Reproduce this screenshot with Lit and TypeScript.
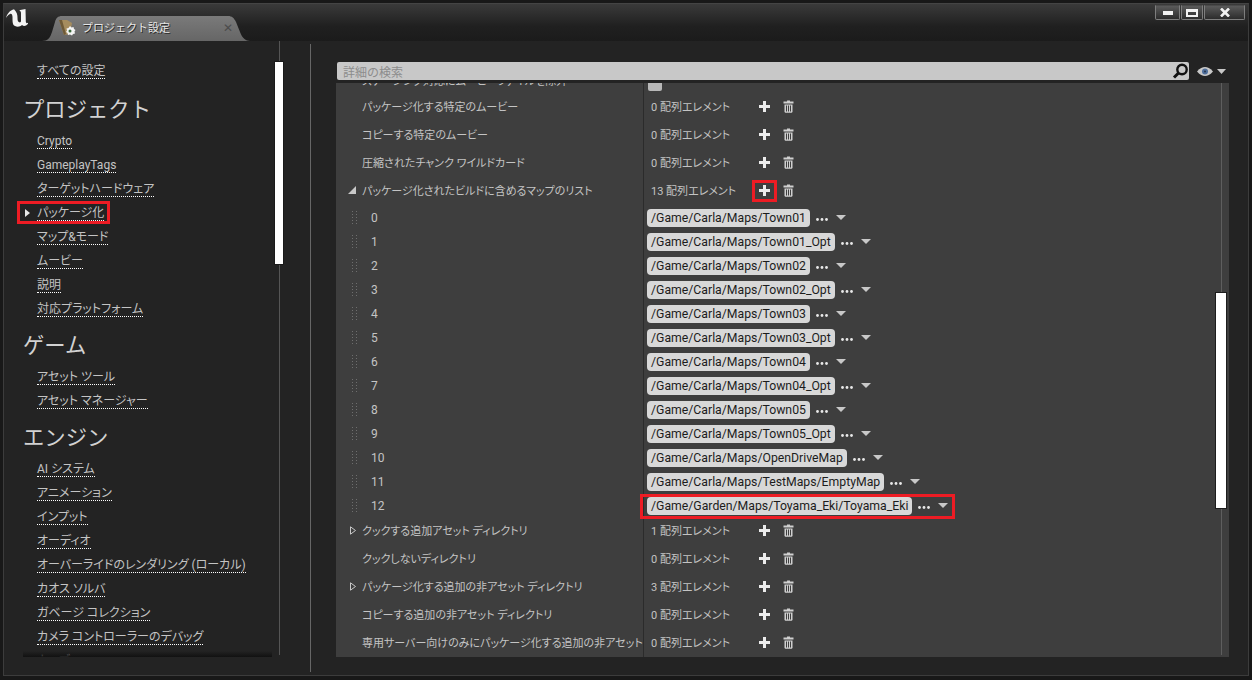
import { LitElement, html, css, svg } from "lit";
import { customElement } from "lit/decorators.js";

const sections = [
  {
    title: "プロジェクト",
    items: ["Crypto", "GameplayTags", "ターゲットハードウェア", "パッケージ化", "マップ&モード", "ムービー", "説明", "対応プラットフォーム"],
  },
  { title: "ゲーム", items: ["アセット ツール", "アセット マネージャー"] },
  {
    title: "エンジン",
    items: ["AI システム", "アニメーション", "インプット", "オーディオ", "オーバーライドのレンダリング (ローカル)", "カオス ソルバ", "ガベージ コレクション", "カメラ コントローラーのデバッグ", "カーブ"],
  },
];

const maps = [
  "/Game/Carla/Maps/Town01",
  "/Game/Carla/Maps/Town01_Opt",
  "/Game/Carla/Maps/Town02",
  "/Game/Carla/Maps/Town02_Opt",
  "/Game/Carla/Maps/Town03",
  "/Game/Carla/Maps/Town03_Opt",
  "/Game/Carla/Maps/Town04",
  "/Game/Carla/Maps/Town04_Opt",
  "/Game/Carla/Maps/Town05",
  "/Game/Carla/Maps/Town05_Opt",
  "/Game/Carla/Maps/OpenDriveMap",
  "/Game/Carla/Maps/TestMaps/EmptyMap",
  "/Game/Garden/Maps/Toyama_Eki/Toyama_Eki",
];

const plusIcon = svg`<svg class="plus" width="11" height="11" viewBox="0 0 11 11"><path d="M4 0h3v4h4v3H7v4H4V7H0V4h4z" fill="#ececec"/></svg>`;
const trashIcon = svg`<svg class="trash" width="11" height="13" viewBox="0 0 11 13"><path d="M4 .5h3v1h3.5v2H.5v-2H4zM1.5 4.5h8V12l-.8.8H2.3L1.5 12z" fill="#d0d0d0"/><path d="M3.5 5.5v6M5.5 5.5v6M7.5 5.5v6" stroke="#3e3e3e" stroke-width="1"/></svg>`;
const openArrow = svg`<svg class="arrow" width="9" height="8" viewBox="0 0 9 8"><path d="M8 0v8H0z" fill="#c8c8c8"/></svg>`;
const closedArrow = svg`<svg class="arrow" width="9" height="9" viewBox="0 0 9 9"><path d="M2.5.8v7.4L7.5 4.5z" fill="none" stroke="#c8c8c8"/></svg>`;

@customElement("app-root")
export class AppRoot extends LitElement {
  static styles = css`
    :host {
      display: block;
      width: 1252px;
      height: 680px;
      position: relative;
      overflow: hidden;
      background: #181818;
      font-family: Roboto, "Noto Sans CJK JP", sans-serif;
      font-size: 11px;
      color: #c4c4c4;
    }
    .window {
      position: absolute;
      inset: 3px 3px 4px 3px;
      border: 1px solid #3c3c3c;
      border-top-color: #444;
      display: flex;
      flex-direction: column;
    }
    .titlebar {
      height: 37px;
      flex: none;
      display: flex;
      background: linear-gradient(#3a3a3a, #202020 60%, #1b1b1b);
    }
    .logo {
      margin: 3px 0 0 0;
      flex: none;
    }
    .tab {
      position: relative;
      width: 208px;
      height: 25px;
      box-sizing: border-box;
      padding-bottom: 4px;
      margin: 12px 0 0 14px;
      flex: none;
      display: flex;
      align-items: center;
      color: #e6e6e6;
      font-size: 11px;
      text-shadow: 1px 1px 0 #2a2a2a;
    }
    .tab-bg {
      position: absolute;
      inset: 0;
    }
    .tab-icon {
      position: relative;
      margin: 2px 0 0 16px;
    }
    .tab-label {
      position: relative;
      margin: 0 0 0 6px;
      flex: 1;
    }
    .tab-close {
      position: relative;
      margin: 2px 17px 0 0;
      color: #4c4c4c;
      font-size: 12px;
      text-shadow: none;
    }
    .controls {
      margin: 1px 3px 0 auto;
      display: flex;
      gap: 1px;
      height: 15px;
    }
    .ctl {
      display: flex;
      align-items: center;
      justify-content: center;
      box-sizing: border-box;
      height: 15px;
      background: linear-gradient(#5a5a5a, #2c2c2c);
      border: 1px solid #7e7e7e;
      border-top-color: #4a4a4a;
      border-radius: 0 0 2px 2px;
    }
    .ctl.min {
      width: 25px;
    }
    .ctl.max {
      width: 22px;
    }
    .ctl.close {
      width: 41px;
    }

    .body {
      flex: 1;
      min-height: 0;
      display: flex;
      background: #232323;
    }
    .sidebar {
      width: 306px;
      flex: none;
      position: relative;
    }
    .nav {
      height: 616px;
      overflow: hidden;
      padding-top: 18px;
      box-sizing: border-box;
    }
    .item {
      height: 24px;
      display: flex;
      align-items: center;
      padding-left: 33px;
      font-size: 12px;
      font-feature-settings: "palt";
    }
    .item.marked {
      padding-left: 21px;
    }
    .marker {
      width: 0;
      height: 0;
      margin-right: 7px;
      border-left: 5px solid #e8e8e8;
      border-top: 4px solid transparent;
      border-bottom: 4px solid transparent;
    }
    .item span {
      line-height: 14px;
      border-bottom: 1px dotted #fff;
      margin-top: 1px;
      white-space: nowrap;
    }
    .heading {
      height: 43px;
      padding: 0 0 1px 19px;
      margin-top: 1px;
      box-sizing: border-box;
      display: flex;
      align-items: center;
      font-size: 21.33px;
      color: #d2d2d2;
    }
    .heading.first {
      margin-top: 3px;
    }
    .nav-track {
      position: absolute;
      left: 275px;
      top: 0;
      bottom: 20px;
      width: 1px;
      background: #555;
    }
    .nav-thumb {
      position: absolute;
      left: 271px;
      top: 21px;
      width: 8px;
      height: 202px;
      background: #fff;
      box-shadow: 0 0 0 1px #1a1a1a;
    }
    .nav-shade {
      position: absolute;
      left: 19px;
      top: 610px;
      width: 249px;
      height: 6px;
      background: linear-gradient(rgba(16, 16, 16, 0), #111);
    }
    .vline {
      width: 1px;
      flex: none;
      margin: 3px 0;
      background: #666;
    }

    .main {
      flex: 1;
      min-width: 0;
      padding: 21px 0 0 25px;
      box-sizing: border-box;
    }
    .searchrow {
      display: flex;
      align-items: center;
      height: 18px;
      margin-left: 1px;
    }
    .search {
      width: 852px;
      height: 18px;
      box-sizing: border-box;
      background: #c8c8c8;
      border-radius: 2px;
      color: #8c8c8c;
      font-size: 12px;
      padding-left: 6px;
      display: flex;
      align-items: center;
      justify-content: space-between;
    }
    .eye {
      margin-left: 8px;
    }
    .eye-arrow {
      margin-left: 4px;
    }
    .panel {
      position: relative;
      width: 893px;
      height: 574px;
      margin-top: 3px;
      background: #3e3e3e;
      overflow: hidden;
    }
    .rows {
      margin-top: -18px;
    }
    .row {
      display: flex;
      height: 28px;
    }
    .row.sub {
      height: 24px;
    }
    .name {
      width: 307px;
      flex: none;
      box-sizing: border-box;
      display: flex;
      align-items: center;
      padding: 0 0 2px 26px;
      white-space: nowrap;
      overflow: hidden;
      font-feature-settings: "palt";
    }
    .name.clipped {
      padding: 2px 0 0 26px;
    }
    .arrow {
      margin-left: -14px;
      margin-right: 5px;
      flex: none;
    }
    .sub .name {
      padding: 1px 0 0 16px;
      font-size: 12px;
    }
    .grip {
      margin-right: 14px;
      margin-top: -2px;
    }
    .value {
      flex: 1;
      border-left: 1px solid #2b2b2b;
      display: flex;
      align-items: center;
      padding: 0 0 2px 3px;
    }
    .sub .value {
      padding-bottom: 0;
    }
    .count {
      width: 112px;
      padding-left: 4px;
      box-sizing: border-box;
      font-feature-settings: "palt";
    }
    .trash {
      margin-left: 13px;
    }
    .check {
      width: 14px;
      height: 14px;
      margin: 12px 0 0 1px;
      background: #b8b8b8;
      border-radius: 2px;
    }
    .chip {
      height: 18px;
      line-height: 18px;
      margin-top: 2px;
      padding: 0 4px;
      background: #d8d8d8;
      border-radius: 4px;
      color: #1c1c1c;
      font-size: 12.25px;
      white-space: nowrap;
    }
    .dots {
      margin: 4px 0 0 6px;
    }
    .drop {
      margin: 1px 0 0 8px;
    }
    .track {
      position: absolute;
      left: 885px;
      top: 0;
      bottom: 2px;
      width: 1px;
      background: #5e5e5e;
    }
    .thumb {
      position: absolute;
      left: 880px;
      top: 210px;
      width: 10px;
      height: 215px;
      background: #fff;
      box-shadow: 0 0 0 1px #1c1c1c;
    }

    .callout {
      position: absolute;
      box-sizing: border-box;
      border: 3px solid #ed1c24;
    }
    .c1 {
      left: 17px;
      top: 201px;
      width: 93px;
      height: 23px;
    }
    .c2 {
      left: 752px;
      top: 180px;
      width: 25px;
      height: 22px;
    }
    .c3 {
      left: 640px;
      top: 494px;
      width: 315px;
      height: 25px;
    }
  `;

  renderNav() {
    return sections.map(
      (s, i) => html`
        <div class="heading ${i === 0 ? "first" : ""}">${s.title}</div>
        ${s.items.map((t) => this.renderItem(t))}
      `
    );
  }

  renderItem(text: string) {
    const marked = text === "パッケージ化";
    return html`<div class="item ${marked ? "marked" : ""}">
      ${marked ? html`<i class="marker"></i>` : ""}<span>${text}</span>
    </div>`;
  }

  renderArrayRow(name: string, count: number, arrow?: "open" | "closed") {
    return html`<div class="row">
      <div class="name">
        ${arrow === "open" ? openArrow : arrow === "closed" ? closedArrow : ""}${name}
      </div>
      <div class="value">
        <div class="count">${count} 配列エレメント</div>
        ${plusIcon}${trashIcon}
      </div>
    </div>`;
  }

  renderMapRow(path: string, i: number) {
    return html`<div class="row sub">
      <div class="name">
        <svg class="grip" width="5" height="14" viewBox="0 0 5 14">
          <path d="M0 1h1v1H0zM4 1h1v1H4zM0 4h1v1H0zM4 4h1v1H4zM0 7h1v1H0zM4 7h1v1H4zM0 10h1v1H0zM4 10h1v1H4zM0 13h1v1H0zM4 13h1v1H4z" fill="#6e6e6e" />
        </svg>
        ${i}
      </div>
      <div class="value">
        <div class="chip">${path}</div>
        <svg class="dots" width="12" height="3" viewBox="0 0 12 3">
          <circle cx="1.5" cy="1.5" r="1.4" fill="#e8e8e8" />
          <circle cx="6" cy="1.5" r="1.4" fill="#e8e8e8" />
          <circle cx="10.5" cy="1.5" r="1.4" fill="#e8e8e8" />
        </svg>
        <svg class="drop" width="10" height="5" viewBox="0 0 10 5"><path d="M0 0h10L5 5z" fill="#c8c8c8" /></svg>
      </div>
    </div>`;
  }

  render() {
    return html`
      <div class="window">
        <div class="titlebar">
          <svg class="logo" width="24" height="20" viewBox="4 7 24 20">
            <path d="M6 18C7 14 10 10 14 9.2C17 12 17.5 15 17.5 18C17.5 21 18 22 20 22.5L21 21.5L21 13C21 11.5 20 10.5 19 10.2L25.5 9L25.8 21C25.8 23 26.7 24 28.3 22.5L28.3 23.5C26 26 24 27 22 25C20 27 17 27 15 26C12.5 25 12.5 22 12.5 17C12.5 14 11 13 10 14C8 15 7 16 6 18Z" fill="#f4f4f4" />
          </svg>
          <div class="tab">
            <svg class="tab-bg" width="208" height="25" viewBox="0 0 208 25">
              <defs>
                <linearGradient id="tabfill" x1="0" y1="0" x2="0" y2="1">
                  <stop offset="0" stop-color="#7a7a7a" />
                  <stop offset="1" stop-color="#666" />
                </linearGradient>
              </defs>
              <path d="M0 25C6 25 8 22 10 16L13 6C14 2 16 0 20 0H186C190 0 192 2 194 6L198 16C200 22 204 25 208 25Z" fill="url(#tabfill)" />
            </svg>
            <svg class="tab-icon" width="18" height="17" viewBox="0 0 18 17">
              <path d="M1 1h8l5 3-2 11-6 1z" fill="#a58c5e" />
              <path d="M1 1l5 15 2-1L4 1z" fill="#6e5a38" />
              <path d="M12 7l1.5 1.5 2-.5.5 2 1.5 1-1 1.5.5 2-2 .5-1 1.5-2-1-2 .5-.5-2-1.5-1 1-1.5-.5-2 2-.5z" fill="#f4f4f4" />
              <circle cx="12" cy="12" r="1.5" fill="#3c6a3c" />
            </svg>
            <span class="tab-label">プロジェクト設定</span>
            <span class="tab-close">✕</span>
          </div>
          <div class="controls">
            <div class="ctl min"><svg width="10" height="4"><path d="M0 0h10v4H0z" fill="#f2f2f2" /></svg></div>
            <div class="ctl max">
              <svg width="12" height="8"><path d="M0 0h12v8H0zM2 3v3h8V3z" fill-rule="evenodd" fill="#f2f2f2" /></svg>
            </div>
            <div class="ctl close">
              <svg width="10" height="9" viewBox="0 0 10 9"><path d="M1 .5l8 8M9 .5l-8 8" stroke="#f2f2f2" stroke-width="2.6" /></svg>
            </div>
          </div>
        </div>
        <div class="body">
          <div class="sidebar">
            <div class="nav">
              ${this.renderItem("すべての設定")} ${this.renderNav()}
            </div>
            <div class="nav-track"></div>
            <div class="nav-thumb"></div>
            <div class="nav-shade"></div>
          </div>
          <div class="vline"></div>
          <div class="main">
            <div class="searchrow">
              <div class="search">
                詳細の検索
                <svg width="17" height="16" viewBox="0 0 17 16">
                  <circle cx="10" cy="6.5" r="4.7" fill="none" stroke="#111" stroke-width="2.4" />
                  <path d="M6.5 10L2 14.5" stroke="#111" stroke-width="3" />
                </svg>
              </div>
              <svg class="eye" width="16" height="9" viewBox="0 0 16 9">
                <path d="M0 4.5C3 1 5.5 0 8 0s5 1 8 4.5C13 8 10.5 9 8 9S3 8 0 4.5z" fill="#c8c8c8" />
                <circle cx="8" cy="4.5" r="3" fill="#4f6f9c" />
                <circle cx="8" cy="4.5" r="1" fill="#26364e" />
              </svg>
              <svg class="eye-arrow" width="9" height="5" viewBox="0 0 9 5"><path d="M0 0h9L4.5 5z" fill="#c8c8c8" /></svg>
            </div>
            <div class="panel">
              <div class="rows">
                <div class="row">
                  <div class="name clipped">ステージング対応にムービーファイルを除外</div>
                  <div class="value"><div class="check"></div></div>
                </div>
                ${this.renderArrayRow("パッケージ化する特定のムービー", 0)}
                ${this.renderArrayRow("コピーする特定のムービー", 0)}
                ${this.renderArrayRow("圧縮されたチャンク ワイルドカード", 0)}
                ${this.renderArrayRow("パッケージ化されたビルドに含めるマップのリスト", 13, "open")}
                ${maps.map((m, i) => this.renderMapRow(m, i))}
                ${this.renderArrayRow("クックする追加アセット ディレクトリ", 1, "closed")}
                ${this.renderArrayRow("クックしないディレクトリ", 0)}
                ${this.renderArrayRow("パッケージ化する追加の非アセット ディレクトリ", 3, "closed")}
                ${this.renderArrayRow("コピーする追加の非アセット ディレクトリ", 0)}
                ${this.renderArrayRow("専用サーバー向けのみにパッケージ化する追加の非アセット ディレクトリ", 0)}
              </div>
              <div class="track"></div>
              <div class="thumb"></div>
            </div>
          </div>
        </div>
      </div>
      <div class="callout c1"></div>
      <div class="callout c2"></div>
      <div class="callout c3"></div>
    `;
  }
}
